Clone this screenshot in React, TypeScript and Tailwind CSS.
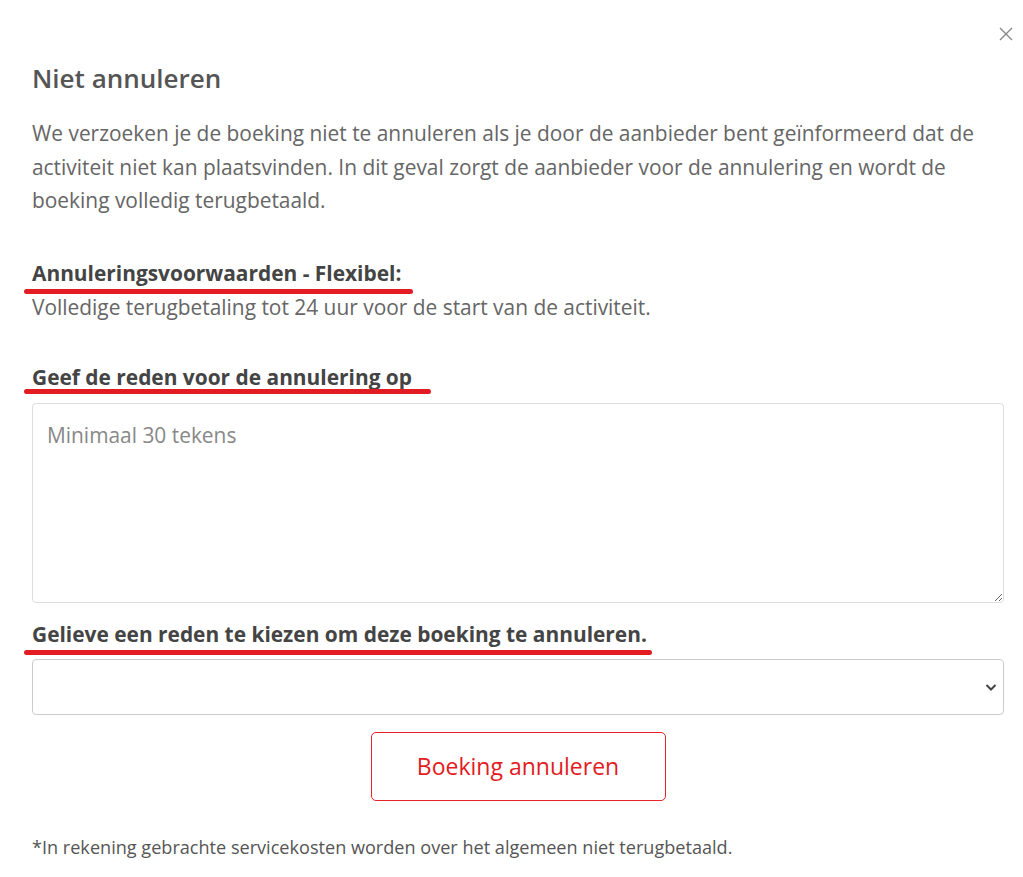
import React from "react";

function Underlined({ children, extra }: { children: React.ReactNode; extra: string }) {
  return (
    <span className="relative inline-block">
      {children}
      <span className={`absolute left-[-8px] h-[5px] rounded-full bg-[#e31b23] ${extra}`} />
    </span>
  );
}

export default function App() {
  return (
    <div className="relative min-h-[877px] w-[1023px] bg-white font-['Open_Sans',sans-serif] text-[#666]">
      <button className="absolute right-[10px] top-[27px] text-[#888]" aria-label="close">
        <svg width="14" height="14" viewBox="0 0 14 14" fill="none" stroke="currentColor" strokeWidth="1.4">
          <path d="M1 1L13 13M13 1L1 13" />
        </svg>
      </button>
      <div className="pl-[32px] pr-[19px] pt-[60px]">
        <h2 className="text-[26px] font-semibold leading-[36px] text-[#555]">Niet annuleren</h2>
        <p className="mt-[21px] text-[20.9px] leading-[33.5px] text-[#666]">
          We verzoeken je de boeking niet te annuleren als je door de aanbieder bent geïnformeerd dat de activiteit niet kan plaatsvinden. In dit geval zorgt de aanbieder voor de annulering en wordt de boeking volledig terugbetaald.
        </p>
        <div className="mt-[40px] text-[20.9px] font-bold leading-[30px] text-[#444]">
          <Underlined extra="bottom-[-6px] right-[-12px]">Annuleringsvoorwaarden - Flexibel:</Underlined>
        </div>
        <p className="mt-[4px] text-[20.9px] leading-[30px] text-[#666]">
          Volledige terugbetaling tot 24 uur voor de start van de activiteit.
        </p>
        <div className="mt-[40px] text-[20.9px] font-bold leading-[30px] text-[#444]">
          <Underlined extra="bottom-[-2px] right-[-19px]">Geef de reden voor de annulering op</Underlined>
        </div>
        <textarea
          className="mt-[11px] block h-[200px] w-full rounded-[4px] border border-[#ddd] px-[14px] py-[16px] text-[20.9px] leading-[30px] text-[#555] placeholder:text-[#888] outline-none"
          placeholder="Minimaal 30 tekens"
        />
        <div className="mt-[16px] text-[20.9px] font-bold leading-[30px] text-[#444]">
          <Underlined extra="bottom-[-6px] right-[-5px]">Gelieve een reden te kiezen om deze boeking te annuleren.</Underlined>
        </div>
        <div className="relative mt-[10px]">
          <select className="block h-[56px] w-full appearance-none rounded-[4px] border border-[#ccc] bg-white px-[14px] text-[20px] text-[#555] outline-none">
            <option value=""></option>
          </select>
          <svg className="pointer-events-none absolute right-[7px] top-[24px]" width="12" height="9" viewBox="0 0 12 9" fill="none" stroke="#444" strokeWidth="2">
            <path d="M1.5 2L6 6.5L10.5 2" />
          </svg>
        </div>
        <div className="mt-[17px] flex justify-center">
          <button className="h-[69px] w-[295px] rounded-[5px] border border-solid border-[#e8232b] text-[23px] text-[#e31b23]">
            Boeking annuleren
          </button>
        </div>
        <p className="mt-[34px] text-[18.1px] leading-[24px] text-[#555]">
          *In rekening gebrachte servicekosten worden over het algemeen niet terugbetaald.
        </p>
      </div>
    </div>
  );
}
